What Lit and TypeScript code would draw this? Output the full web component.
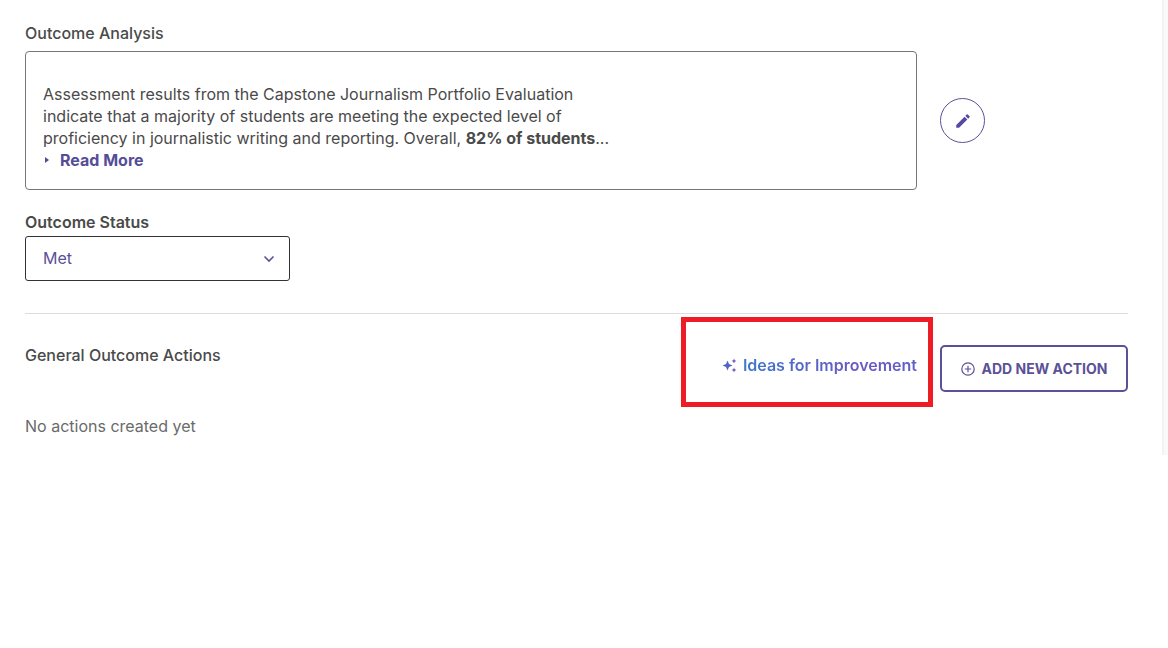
import { LitElement, html, css } from "lit";
import { customElement, state } from "lit/decorators.js";

@customElement("app-root")
export class AppRoot extends LitElement {
  static styles = css`
    :host {
      display: block;
      background: #fff;
      color: #4a4a4a;
      font: 400 16px/22px Inter, "Liberation Sans", sans-serif;
    }
    * {
      box-sizing: border-box;
    }
    .page {
      display: grid;
      grid-template-columns: minmax(0, 1fr) 6px;
    }
    .gutter {
      background: #f9f9f9;
      border-left: 2px solid #f3f3f3;
    }
    .panel {
      padding: 22px 34px 18px 25px;
    }
    .heading {
      margin: 0;
      font-size: 16px;
      line-height: 22px;
      font-weight: 500;
    }
    .row {
      display: grid;
      grid-template-columns: minmax(0, 1fr) 188px;
      column-gap: 23px;
    }
    .analysis {
      margin-top: 7px;
      align-items: center;
    }
    .box {
      border: 1px solid #767676;
      border-radius: 4px;
      padding: 31px 17px 18px;
    }
    .text {
      margin: 0;
      max-width: 570px;
    }
    .text strong {
      font-weight: 700;
    }
    button {
      font-family: inherit;
      background: #fff;
      color: #5b5198;
      cursor: pointer;
    }
    .more {
      display: flex;
      align-items: center;
      gap: 11px;
      border: 0;
      padding: 0 2px;
      font-size: 16px;
      line-height: 22px;
      font-weight: 700;
      color: #554d98;
    }
    .edit {
      display: grid;
      place-items: center;
      width: 45px;
      height: 45px;
      padding: 0;
      border: 1px solid #5b5198;
      border-radius: 50%;
    }
    .status {
      display: flex;
      flex-direction: column;
      gap: 3px;
      margin-top: 21px;
      max-width: 265px;
    }
    .label {
      font-weight: 600;
    }
    .field {
      display: grid;
      align-items: center;
    }
    .field > * {
      grid-area: 1 / 1;
    }
    .select {
      appearance: none;
      width: 100%;
      height: 45px;
      padding: 0 17px 2px;
      border: 1px solid #333;
      border-radius: 3px;
      background: #fff;
      color: #5b5198;
      font: inherit;
    }
    .chevron {
      justify-self: end;
      margin-right: 15px;
      pointer-events: none;
    }
    .rule {
      height: 1px;
      margin: 32px 0 30px;
      border: 0;
      background: #dcdcdc;
    }
    .lead {
      display: flex;
      justify-content: space-between;
      align-items: flex-start;
    }
    .ideas {
      position: relative;
      display: flex;
      align-items: center;
      gap: 5px;
      padding: 10px 0;
      font-weight: 600;
      text-decoration: none;
    }
    .ideas-text {
      background: linear-gradient(100deg, #3b78cc, #6a58c4 65%, #5f5fc4);
      background-clip: text;
      -webkit-background-clip: text;
      color: transparent;
    }
    .mark {
      position: absolute;
      inset: -27px -16px -21px -41px;
      border: 5px solid #ee1c25;
      pointer-events: none;
    }
    .add {
      display: flex;
      align-items: center;
      justify-content: center;
      gap: 7px;
      height: 47px;
      margin: 1px 0 0;
      padding: 0;
      border: 2px solid #5b5198;
      border-radius: 5px;
      font-size: 14px;
      line-height: 20px;
      font-weight: 700;
      text-transform: uppercase;
    }
    .empty {
      margin: 23px 0 0;
      color: #6a6a6a;
    }
    svg {
      display: block;
      flex: none;
    }
  `;

  @state() private status = "Met";

  private onStatus(e: Event) {
    this.status = (e.target as HTMLSelectElement).value;
  }

  render() {
    return html`
      <div class="page">
        <main class="panel">
          <h2 class="heading">Outcome Analysis</h2>
          <div class="row analysis">
            <div class="box">
              <p class="text">
                Assessment results from the Capstone Journalism Portfolio Evaluation indicate that
                a majority of students are meeting the expected level of proficiency in
                journalistic writing and reporting. Overall, <strong>82% of students</strong>...
              </p>
              <button class="more" type="button">
                <svg width="4" height="6" viewBox="0 0 4 6" aria-hidden="true">
                  <path d="M0 0L4 3L0 6Z" fill="#524b97" />
                </svg>
                Read More
              </button>
            </div>
            <button class="edit" type="button" aria-label="Edit outcome analysis">
              <svg width="18" height="18" viewBox="0 0 24 24" aria-hidden="true">
                <path
                  fill="#5748a0"
                  d="M3 17.25V21h3.75L17.81 9.94l-3.75-3.75L3 17.25zM20.71 7.04a1 1 0 0 0 0-1.41l-2.34-2.34a1 1 0 0 0-1.41 0l-1.83 1.83 3.75 3.75 1.83-1.83z"
                />
              </svg>
            </button>
          </div>

          <div class="status">
            <label class="label" for="status">Outcome Status</label>
            <div class="field">
              <select id="status" class="select" .value=${this.status} @change=${this.onStatus}>
                <option>Met</option>
                <option>Not Met</option>
              </select>
              <svg class="chevron" width="12" height="8" viewBox="0 0 12 8" aria-hidden="true">
                <path d="M1.5 1.5L6 6L10.5 1.5" fill="none" stroke="#5b5198" stroke-width="1.6" />
              </svg>
            </div>
          </div>

          <hr class="rule" />

          <section class="row">
            <div class="lead">
              <h2 class="heading">General Outcome Actions</h2>
              <a class="ideas" href="#ideas">
                <svg width="16" height="16" viewBox="0 0 16 16" aria-hidden="true">
                  <defs>
                    <linearGradient id="spark" x1="0" y1="0" x2="1" y2="0">
                      <stop offset="0" stop-color="#3f6fcb" />
                      <stop offset="1" stop-color="#6a52b5" />
                    </linearGradient>
                  </defs>
                  <path
                    fill="url(#spark)"
                    d="M5.5 3.5L7 7L10.500 8.500L7 10L5.500 13.500L4 10L0.500 8.500L4 7ZM12 1.500L12.700 3.300L14.500 4L12.700 4.700L12 6.500L11.300 4.700L9.500 4L11.300 3.300ZM12 10.500L12.700 12.300L14.500 13L12.700 13.700L12 15.500L11.300 13.700L9.500 13L11.300 12.300Z"
                  />
                </svg>
                <span class="ideas-text">Ideas for Improvement</span>
                <span class="mark"></span>
              </a>
            </div>
            <button class="add" type="button">
              <svg width="14" height="14" viewBox="0 0 14 14" aria-hidden="true">
                <g fill="none" stroke="#5b5198" stroke-width="1.2">
                  <circle cx="7" cy="7" r="6.2" />
                  <path d="M7 3.800V10.200M3.800 7H10.200" />
                </g>
              </svg>
              Add new action
            </button>
          </section>
          <p class="empty">No actions created yet</p>
        </main>
        <div class="gutter"></div>
      </div>
    `;
  }
}
